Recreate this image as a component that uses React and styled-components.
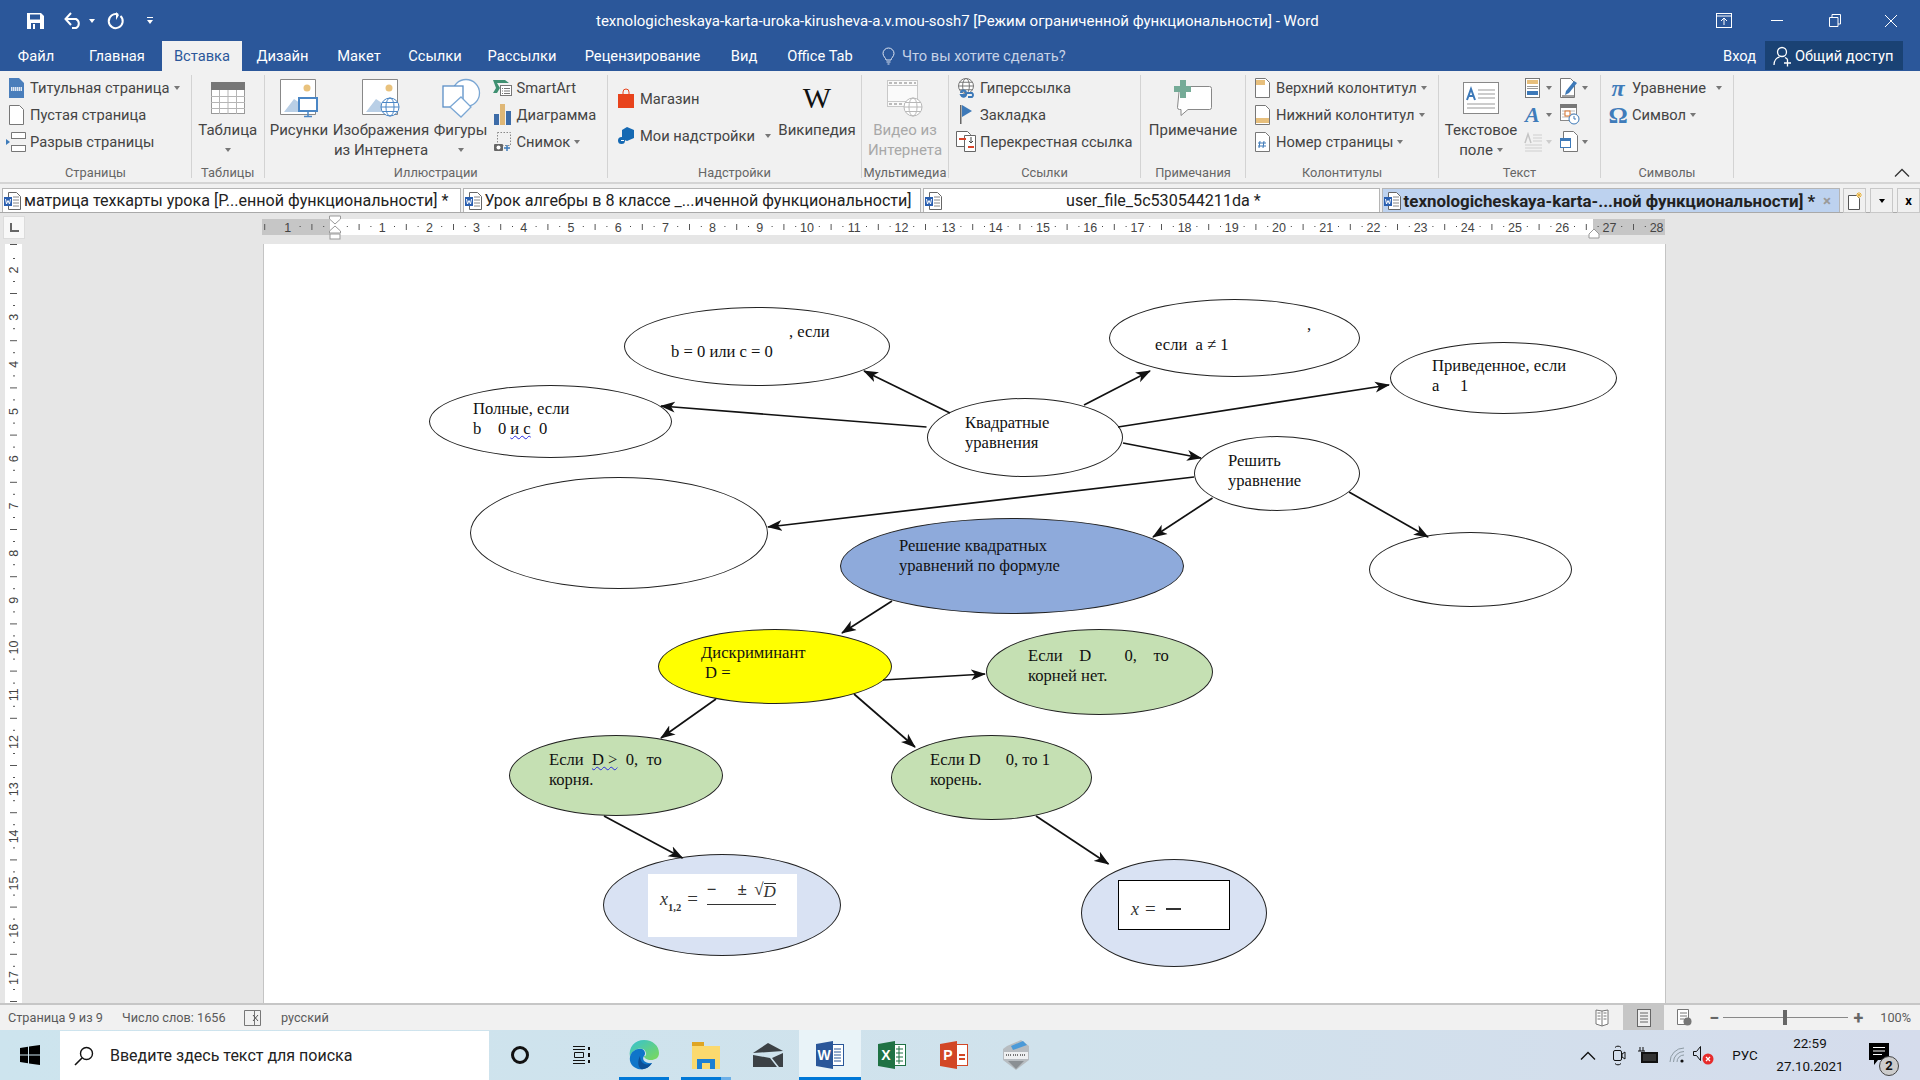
import React from "react";
import styled, { createGlobalStyle } from "styled-components";

const UI_FONT = `Roboto, "Liberation Sans", sans-serif`;

const GlobalStyle = createGlobalStyle`
  html, body { margin: 0; padding: 0; overflow: hidden; background: #e6e6e6; }
  body { font-family: ${UI_FONT}; }
`;

const Window = styled.div`
  width: 1920px;
  height: 1080px;
  display: flex;
  flex-direction: column;
  overflow: hidden;
`;

/* title bar */
const TitleBar = styled.div`
  height: 41px;
  background: #2b579a;
  display: flex;
  align-items: center;
  color: #fff;
`;
const Qat = styled.div`
  width: 596px;
  display: flex;
  align-items: center;
  padding-left: 27px;
  box-sizing: border-box;
`;
const QatSlot = styled.span`
  display: flex;
  align-items: center;
  margin-right: ${(p) => p.$gap || 0}px;
`;
const TitleText = styled.div`
  width: 1100px;
  font-size: 15px;
  white-space: nowrap;
`;
const WinButtons = styled.div`
  display: flex;
  align-items: center;
`;
const WinButton = styled.span`
  width: ${(p) => p.$w}px;
  display: flex;
  justify-content: center;
`;

/* ribbon tabs */
const TabBar = styled.div`
  height: 30px;
  background: #2b579a;
  display: flex;
  align-items: stretch;
  color: #fff;
  font-size: 14.7px;
`;
const Tab = styled.div`
  width: ${(p) => p.$w}px;
  display: flex;
  align-items: center;
  justify-content: center;
  white-space: nowrap;
  background: ${(p) => (p.$active ? "#f1f1f1" : "transparent")};
  color: ${(p) => (p.$active ? "#2b579a" : "#fff")};
`;
const Tell = styled.div`
  display: flex;
  align-items: center;
  gap: 7px;
  color: #c6d2e6;
  width: 855px;
  padding-left: 14px;
  box-sizing: border-box;
`;
const SignIn = styled.div`
  display: flex;
  align-items: center;
  width: 42px;
`;
const Share = styled.div`
  width: 138px;
  display: flex;
  align-items: center;
  gap: 3px;
  padding-left: 8px;
  box-sizing: border-box;
  margin-bottom: 1px;
  background: #1a4274;
`;

/* ribbon */
const Ribbon = styled.div`
  height: 111px;
  background: #f1f1f1;
  display: flex;
  position: relative;
  color: #444;
  font-size: 15px;
`;
const Group = styled.div`
  width: ${(p) => p.$w}px;
  height: 103px;
  margin-top: 4px;
  box-sizing: border-box;
  border-right: 1px solid #d3d3d3;
  display: flex;
  flex-direction: column;
`;
const GroupBody = styled.div`
  height: 90px;
  display: flex;
  padding-left: ${(p) => p.$pad || 0}px;
`;
const GroupLabel = styled.div`
  height: 13px;
  line-height: 16px;
  text-align: center;
  font-size: 12.8px;
  color: #666;
  white-space: nowrap;
`;
const SmallCol = styled.div`
  display: flex;
  flex-direction: column;
  width: ${(p) => (p.$w ? `${p.$w}px` : "auto")};
  gap: ${(p) => p.$gap || 0}px;
  margin-top: ${(p) => p.$top ?? -1}px;
  margin-left: ${(p) => p.$left || 0}px;
  font-size: 14.7px;
`;
const SmallRow = styled.div`
  height: 27px;
  display: flex;
  align-items: center;
  white-space: nowrap;
`;
const RowIcon = styled.span`
  width: 20px;
  margin-right: 4px;
  display: flex;
  justify-content: center;
  align-items: center;
`;
const Caret = styled.span`
  display: inline-block;
  width: 0;
  height: 0;
  margin-left: ${(p) => p.$left ?? 4}px;
  border-left: 3.5px solid transparent;
  border-right: 3.5px solid transparent;
  border-top: 4px solid ${(p) => p.$color || "#777"};
`;
const LargeButton = styled.div`
  width: ${(p) => p.$w}px;
  display: flex;
  flex-direction: column;
  align-items: center;
  color: ${(p) => (p.$off ? "#a8a8a8" : "inherit")};
`;
const LargeIcon = styled.div`
  height: 45px;
  display: flex;
  align-items: center;
  justify-content: center;
`;
const LargeLine = styled.div`
  height: 20px;
  line-height: 20px;
  white-space: nowrap;
  display: flex;
  align-items: center;
`;
const MiniGrid = styled.div`
  display: grid;
  grid-template-columns: 35px 35px;
  grid-auto-rows: 27px;
  padding-left: 2px;
  margin-top: -1px;
`;
const MiniCell = styled.div`
  display: flex;
  align-items: center;
`;
const Collapse = styled.span`
  position: absolute;
  right: 10px;
  bottom: 5px;
`;
const BigSerif = styled.span`
  font-family: "Liberation Serif", serif;
  font-size: 30px;
  color: #111;
  line-height: 1;
`;
const MathGlyph = styled.span`
  font-family: "Liberation Serif", serif;
  font-style: ${(p) => (p.$italic ? "italic" : "normal")};
  font-weight: 700;
  font-size: ${(p) => p.$size || 24}px;
  line-height: 1;
  color: #3f7cba;
`;

/* document tabs */
const DocTabs = styled.div`
  height: 31px;
  box-sizing: border-box;
  background: #f0f0f0;
  border-top: 2px solid #d4d4d4;
  border-bottom: 1px solid #a9a9a9;
  padding: 4px 0 0 2px;
  display: flex;
  gap: 2px;
  font-size: 16px;
  color: #222;
`;
const DocTab = styled.div`
  width: ${(p) => p.$w}px;
  box-sizing: border-box;
  border: 1px solid #b5b5b5;
  border-bottom: none;
  background: ${(p) => (p.$active ? "#bdd2ef" : "#fff")};
  font-weight: ${(p) => (p.$active ? 700 : 400)};
  font-size: ${(p) => (p.$active ? 16.9 : 16.1)}px;
  display: flex;
  align-items: center;
  padding-left: 1px;
  white-space: nowrap;
  overflow: hidden;
`;
const DocTabName = styled.span`
  flex: 1;
  padding-left: ${(p) => p.$pad || 3}px;
`;
const DocClose = styled.span`
  color: #9a9a9a;
  font-weight: 700;
  font-size: 15px;
  margin-right: 8px;
`;
const StripButton = styled.div`
  width: 23px;
  margin-left: ${(p) => p.$left || 1}px;
  height: 25px;
  box-sizing: border-box;
  border: 1px solid #c8c8c8;
  display: flex;
  align-items: center;
  justify-content: center;
  color: #000;
  font-weight: 700;
  font-size: 13px;
`;

/* document area */
const DocArea = styled.div`
  height: 790px;
  background: #e6e6e6;
  display: flex;
  flex-direction: column;
`;
const RulerRow = styled.div`
  height: 31px;
  display: flex;
  padding-top: 3px;
  box-sizing: border-box;
`;
const RulerCorner = styled.div`
  width: 22px;
  height: 23px;
  margin-left: 3px;
  box-sizing: border-box;
  background: #f8f8f8;
  border: 1px solid #dcdcdc;
  display: flex;
  align-items: center;
  justify-content: center;
`;
const HRulerSlot = styled.div`
  margin-left: 237px;
`;
const DocBody = styled.div`
  flex: 1;
  display: flex;
  min-height: 0;
`;
const VRulerSlot = styled.div`
  width: 17px;
  margin-left: 5px;
  background: #fff;
  overflow: hidden;
`;
const Page = styled.div`
  width: 1403px;
  margin-left: 241px;
  box-sizing: border-box;
  background: #fff;
  border-left: 1px solid #c4c4c4;
  border-right: 1px solid #c4c4c4;
  position: relative;
  overflow: hidden;
`;
const Arrows = styled.svg`
  position: absolute;
  left: 0;
  top: 0;
`;
const Node = styled.div`
  position: absolute;
  left: ${(p) => p.$x - 264}px;
  top: ${(p) => p.$y - 244}px;
  width: ${(p) => p.$w}px;
  height: ${(p) => p.$h}px;
  box-sizing: border-box;
  padding: ${(p) => p.$top || 0}px 0 0 ${(p) => p.$left || 0}px;
  background: ${(p) => p.$bg || "#fff"};
  border: 1px solid #222;
  border-radius: 50%;
  font-family: "Liberation Serif", serif;
  font-size: 16.6px;
  line-height: 20px;
  color: #111;
  white-space: pre;
`;
const Line = styled.div`
  height: 20px;
  padding-left: ${(p) => p.$indent || 0}px;
`;
const Wavy = styled.span`
  text-decoration: underline wavy #2a2ae0 1px;
`;
const FormulaBox = styled.div`
  position: absolute;
  left: ${(p) => p.$x}px;
  top: ${(p) => p.$y}px;
  width: ${(p) => p.$w}px;
  height: ${(p) => p.$h}px;
  box-sizing: border-box;
  background: #fff;
  border: ${(p) => (p.$framed ? "1px solid #000" : "none")};
  display: flex;
  align-items: ${(p) => (p.$framed ? "center" : "flex-start")};
  padding: ${(p) => p.$pad};
  font-family: "Liberation Serif", serif;
  font-size: 17px;
  color: #333;
`;
const MathVar = styled.i`
  font-size: 18px;
`;
const MathSub = styled.span`
  font-size: 10.5px;
  font-weight: 700;
  margin-top: 9px;
`;
const Eq = styled.span`
  margin: 0 9px 0 6px;
  font-size: 19px;
`;
const Fraction = styled.div`
  width: 69px;
  height: 22px;
  margin-top: -10px;
  border-bottom: 1.5px solid #333;
  display: flex;
  align-items: center;
  line-height: 18px;
  padding-bottom: 3px;
  font-weight: 700;
`;
const FractionPlusMinus = styled.span`
  margin-left: 21px;
`;
const Radical = styled.span`
  display: flex;
  align-items: flex-end;
  margin-left: auto;
  font-weight: 400;
`;
const Radicand = styled.i`
  border-top: 1px solid #333;
  line-height: 15px;
`;
const BarMinus = styled.span`
  display: inline-block;
  width: 15px;
  height: 2px;
  background: #333;
  margin-left: 1px;
`;

/* status bar */
const StatusBar = styled.div`
  height: 27px;
  box-sizing: border-box;
  background: #f1f1f1;
  border-top: 2px solid #c6c6c6;
  display: flex;
  align-items: center;
  font-size: 12.7px;
  color: #5a5a5a;
  padding-left: 8px;
`;
const StatusText = styled.span`
  width: ${(p) => p.$w}px;
  padding-left: ${(p) => p.$pad || 0}px;
  white-space: nowrap;
`;
const StatusIcon = styled.span`
  width: ${(p) => p.$w}px;
  height: 25px;
  display: flex;
  align-items: center;
  justify-content: center;
  margin-left: ${(p) => p.$left || 0}px;
  background: ${(p) => (p.$on ? "#c6c6c6" : "transparent")};
`;
const StatusRight = styled.div`
  margin-left: auto;
  display: flex;
  align-items: center;
  padding-right: 9px;
`;
const Zoom = styled.div`
  width: 125px;
  height: 1px;
  background: #888;
  margin: 0 3px 0 2px;
  position: relative;
`;
const ZoomThumb = styled.span`
  position: absolute;
  left: 60px;
  top: -7px;
  width: 4px;
  height: 15px;
  background: #666;
`;
const ZoomSign = styled.span`
  width: 14px;
  margin-left: ${(p) => p.$left || 0}px;
  text-align: center;
  font-size: 18px;
  line-height: 1;
  font-weight: 700;
  color: #666;
`;
const ZoomValue = styled.span`
  margin-left: 15px;
`;

/* taskbar */
const Taskbar = styled.div`
  height: 50px;
  background: linear-gradient(90deg, #cde4ee 0%, #d0e2ec 55%, #d5dcec 100%);
  display: flex;
  align-items: stretch;
  color: #111;
`;
const StartSlot = styled.div`
  width: 60px;
  display: flex;
  align-items: center;
  justify-content: center;
`;
const SearchBox = styled.div`
  width: 429px;
  margin-top: 1px;
  background: #fff;
  display: flex;
  align-items: center;
  font-size: 16px;
  color: #222;
  box-sizing: border-box;
  padding-left: 14px;
  gap: 16px;
`;
const TaskCell = styled.div`
  width: 62px;
  display: flex;
  align-items: center;
  justify-content: center;
  position: relative;
  background: ${(p) => (p.$active ? "#e9f3f8" : "transparent")};
`;
const RunBar = styled.span`
  position: absolute;
  bottom: 0;
  height: 3px;
  left: ${(p) => p.$inset}px;
  right: ${(p) => p.$inset}px;
  background: ${(p) => (p.$split ? "linear-gradient(90deg, #0078d7 80%, #6db0e8 80%)" : "#0078d7")};
`;
const Tray = styled.div`
  margin-left: auto;
  display: flex;
  padding-right: 8px;
  font-size: 13.4px;
`;
const TrayCell = styled.div`
  width: ${(p) => p.$w}px;
  display: flex;
  flex-direction: column;
  align-items: center;
  justify-content: center;
  line-height: 23px;
  position: relative;
`;
const NotifBadge = styled.span`
  position: absolute;
  left: 33px;
  top: 26px;
  width: 20px;
  height: 20px;
  box-sizing: border-box;
  border-radius: 50%;
  border: 1px solid #444;
  background: #ccc;
  font-size: 13px;
  font-weight: 700;
  line-height: 18px;
  text-align: center;
`;

/* icon drawings */
const Drawing = styled.svg`
  display: block;
  overflow: visible;
`;
const Glyph = ({ w, h, children }) => (
  <Drawing width={w} height={h} viewBox={`0 0 ${w} ${h}`}>
    {children}
  </Drawing>
);
const pageD = (x, y, w, h) => `M${x + 0.5} ${y + 0.5}h${w - 5}l4 4v${h - 5}h-${w - 1}z`;

const SaveIcon = () => (
  <Glyph w={17} h={16}>
    <path d="M0 0h14l3 3v13H0z" fill="#fff" />
    <rect x="3" y="1.5" width="10" height="5" fill="#2b579a" />
    <rect x="4" y="10" width="9" height="6" fill="#2b579a" />
    <rect x="6" y="11" width="2" height="5" fill="#fff" />
  </Glyph>
);
const UndoIcon = () => (
  <Glyph w={19} h={17}>
    <path d="M2 7h10a5 5 0 0 1 0 9H8" fill="none" stroke="#fff" strokeWidth="2" />
    <path d="M7 1L1.5 7 7 13" fill="none" stroke="#fff" strokeWidth="2" />
  </Glyph>
);
const RedoIcon = () => (
  <Glyph w={17} h={17}>
    <path d="M11 2.5A7 7 0 1 0 13.5 4" fill="none" stroke="#fff" strokeWidth="2" />
    <path d="M9 0l3 3-3 5V0z" fill="#fff" />
  </Glyph>
);
const CustomizeIcon = () => (
  <Glyph w={7} h={8}>
    <rect y="0" width="6" height="1" fill="#fff" />
    <path d="M0 3h6L3 7z" fill="#fff" />
  </Glyph>
);
const RibbonDisplayIcon = () => (
  <Glyph w={16} h={15}>
    <rect x="0.5" y="0.5" width="15" height="14" fill="none" stroke="#fff" />
    <path d="M1 3h14M8 12V5M5 8l3-3 3 3" fill="none" stroke="#fff" />
  </Glyph>
);
const MinIcon = () => (
  <Glyph w={12} h={2}>
    <rect width="12" height="1" fill="#fff" />
  </Glyph>
);
const MaxIcon = () => (
  <Glyph w={12} h={13}>
    <path d="M3 3V.5h8.5V10H9M.5 3.5H9v9H.5z" fill="none" stroke="#fff" />
  </Glyph>
);
const CloseIcon = () => (
  <Glyph w={12} h={12}>
    <path d="M0 0l12 12M12 0L0 12" stroke="#fff" />
  </Glyph>
);
const BulbIcon = () => (
  <Glyph w={13} h={17}>
    <path d="M4 12c0-2-3-3.500-3-6.500a5.500 5.500 0 0 1 11 0c0 3-3 4.500-3 6.500z M4.500 14h4M5.500 16h2" fill="none" stroke="#dfe6f2" />
  </Glyph>
);
const PersonIcon = () => (
  <Glyph w={19} h={20}>
    <circle cx="9" cy="6" r="4.500" fill="none" stroke="#fff" strokeWidth="1.300" />
    <path d="M1 19c0-5 3-7.500 5.500-8M12 11.500c1 .5 2 1 2.500 2M11 17h7M14.500 13.500v7" fill="none" stroke="#fff" strokeWidth="1.300" />
  </Glyph>
);
const CoverIcon = () => (
  <Glyph w={15} h={20}>
    <path d="M0 0h10l5 5v15H0z" fill="#4a7ebb" />
    <rect x="2" y="9" width="11" height="4" fill="#dfe8f3" />
    <path d="M3 10h9M3 12h9" stroke="#4a7ebb" strokeDasharray="1 1" />
  </Glyph>
);
const BlankIcon = () => (
  <Glyph w={15} h={20}>
    <path d={pageD(0, 0, 15, 20)} fill="#fff" stroke="#777" />
  </Glyph>
);
const BreakIcon = () => (
  <Glyph w={20} h={20}>
    <path d="M5.500 6.500V.5h14v6M5.500 13.500v6h14v-6M5 6.500h15M5 13.500h15" fill="#fff" stroke="#777" />
    <path d="M0 7l4 3-4 3z" fill="#3f7cba" />
  </Glyph>
);
const TableIcon = () => (
  <Glyph w={34} h={32}>
    <rect x="0.500" y="0.500" width="33" height="31" fill="#fff" stroke="#999" />
    <rect x="0" y="0" width="34" height="8" fill="#777" />
    <path d="M0 14.500h34M0 20.500h34M0 26.500h34M8.500 8v24M17 8v24M25.500 8v24" stroke="#b5b5b5" />
  </Glyph>
);
const PictureBase = () => (
  <g>
    <path d="M.5.5h35v35H.5z" fill="#fff" stroke="#888" />
    <circle cx="27" cy="9" r="3.500" fill="#e9c27d" />
    <path d="M4 33l10-13 6 4 4-3v12H4z" fill="#b9cfe6" />
  </g>
);
const PicturesIcon = () => (
  <Glyph w={38} h={38}>
    <PictureBase />
    <rect x="19" y="19" width="18" height="13" fill="#fff" stroke="#4a86c5" strokeWidth="2" />
    <path d="M28 32v5M24 37.500h8" stroke="#4a86c5" strokeWidth="1.500" />
  </Glyph>
);
const GlobeGlyph = ({ cx, cy, r, color }) => (
  <g fill="none" stroke={color} strokeWidth="1">
    <circle cx={cx} cy={cy} r={r} fill="#fff" />
    <ellipse cx={cx} cy={cy} rx={r * 0.45} ry={r} />
    <path d={`M${cx - r} ${cy}h${r * 2}M${cx - r * 0.85} ${cy - r * 0.5}h${r * 1.7}M${cx - r * 0.85} ${cy + r * 0.5}h${r * 1.7}`} />
  </g>
);
const OnlineIcon = () => (
  <Glyph w={38} h={38}>
    <PictureBase />
    <GlobeGlyph cx={28} cy={28} r={9} color="#4a86c5" />
  </Glyph>
);
const ShapesIcon = () => (
  <Glyph w={38} h={38}>
    <circle cx="24" cy="14" r="13.500" fill="#fff" stroke="#7ba7d4" strokeWidth="1.300" />
    <rect x="1" y="7" width="20" height="21" fill="#fff" stroke="#5b8fc7" strokeWidth="1.300" />
    <path d="M19 18l10 10-10 10L8 28z" fill="#fff" stroke="#7ba7d4" strokeWidth="1.300" />
  </Glyph>
);
const SmartArtIcon = () => (
  <Glyph w={19} h={16}>
    <path d="M0 0h12l4 3H4l3 5-3 5H0l3-5z" fill="#3f9071" />
    <rect x="7.500" y="5.500" width="11" height="10" fill="#fff" stroke="#777" />
    <path d="M9 8.500h1M11 8.500h6M9 11h1M11 11h6M9 13.500h1M11 13.500h6" stroke="#777" />
  </Glyph>
);
const ChartIcon = () => (
  <Glyph w={17} h={21}>
    <rect x="0" y="10" width="5" height="11" fill="#3d6ca8" />
    <rect x="6" y="0" width="5" height="21" fill="#dfb776" />
    <rect x="12" y="7" width="5" height="14" fill="#3d6ca8" />
  </Glyph>
);
const SnapIcon = () => (
  <Glyph w={17} h={20}>
    <rect x="3.500" y="0.500" width="13" height="13" fill="none" stroke="#888" strokeDasharray="1.500 1.500" />
    <rect x="0" y="12" width="9" height="7" rx="1" fill="#666" />
    <circle cx="4.500" cy="15.500" r="2" fill="#fff" />
    <path d="M10 16h6M13 13v6" stroke="#3f7cba" strokeWidth="1.500" />
  </Glyph>
);
const StoreIcon = () => (
  <Glyph w={16} h={19}>
    <path d="M0 5h16v14H0z" fill="#e8431c" />
    <path d="M5 7V3a3 3 0 0 1 6 0v4" fill="none" stroke="#e8431c" />
  </Glyph>
);
const AddinsIcon = () => (
  <Glyph w={17} h={18}>
    <path d="M9 0l7 3v8l-7 3-5-2V3z" fill="#1569b3" />
    <circle cx="3.500" cy="13.500" r="3.500" fill="#1569b3" />
    <path d="M3 13.500h3" stroke="#fff" />
  </Glyph>
);
const VideoIcon = () => (
  <Glyph w={36} h={36}>
    <rect x="0.500" y="0.500" width="30" height="26" fill="#fafafa" stroke="#c8c8c8" />
    <path d="M0 5.500h31M0 21.500h31" stroke="#c8c8c8" />
    <path d="M2 3h27M2 24h27" stroke="#bbb" strokeDasharray="3 2" strokeWidth="2" />
    <GlobeGlyph cx={26} cy={27} r={9} color="#b8b8b8" />
  </Glyph>
);
const LinkIcon = () => (
  <Glyph w={19} h={20}>
    <GlobeGlyph cx={9} cy={8} r={7.500} color="#777" />
    <path d="M4 15a2.500 2.500 0 0 1 5 0M9 15a2.500 2.500 0 0 1 -5 2h5M10 15h5a2.500 2.500 0 0 1 0 4h-4" fill="none" stroke="#3d79b8" strokeWidth="2" />
  </Glyph>
);
const BookmarkIcon = () => (
  <Glyph w={13} h={19}>
    <rect x="0" y="0" width="1.500" height="19" fill="#666" />
    <path d="M2 0l10 6-10 6z" fill="#3d79b8" />
  </Glyph>
);
const CrossRefIcon = () => (
  <Glyph w={20} h={21}>
    <path d="M.5.5h11l3 3v12H.5z" fill="#fff" stroke="#666" />
    <path d="M8.500 4.500h11v16h-11z" fill="#fff" stroke="#666" />
    <rect x="3" y="7" width="7" height="2" fill="#d9442a" />
    <rect x="12" y="15" width="6" height="2" fill="#d9442a" />
    <path d="M15 6v6M13 10l2 2 2-2" fill="none" stroke="#444" />
  </Glyph>
);
const CommentIcon = () => (
  <Glyph w={38} h={36}>
    <path d="M5.500 6.500h30a2 2 0 0 1 2 2v19a2 2 0 0 1 -2 2H14l-7 6v-6H5.500a2 2 0 0 1 -2 -2z" fill="#fff" stroke="#888" />
    <rect x="0" y="6" width="17" height="6" fill="#75ab97" />
    <rect x="6" y="0" width="6" height="18" fill="#75ab97" />
  </Glyph>
);
const HeaderFooterIcon = ({ foot }) => (
  <Glyph w={15} h={20}>
    <path d={pageD(0, 0, 15, 20)} fill="#fff" stroke="#777" />
    <rect x="1" y={foot ? 13 : 2} width={foot ? 13 : 9} height="5" fill="#e7bf7c" />
  </Glyph>
);
const PageNoIcon = () => (
  <Glyph w={15} h={20}>
    <path d={pageD(0, 0, 15, 20)} fill="#fff" stroke="#777" />
    <path d="M5 9l-1 7M9 9l-1 7M3 11h8M3 14h8" stroke="#3d79b8" />
  </Glyph>
);
const TextBoxIcon = () => (
  <Glyph w={36} h={32}>
    <rect x="0.500" y="0.500" width="35" height="31" fill="#fff" stroke="#888" />
    <path d="M4 18l4-11 4 11M5.500 14h5" fill="none" stroke="#3d79b8" strokeWidth="2" />
    <path d="M15 8h17M15 12h17M15 16h17M4 22h28M4 26h28" stroke="#999" />
  </Glyph>
);
const PartsIcon = () => (
  <Glyph w={15} h={20}>
    <rect x="0.500" y="0.500" width="14" height="19" fill="#fff" stroke="#777" />
    <rect x="2" y="2" width="11" height="4" fill="#e7bf7c" />
    <path d="M2 8.500h11M2 10.500h11" stroke="#999" />
    <rect x="2" y="13" width="11" height="4" fill="#3d79b8" />
  </Glyph>
);
const SignIcon = () => (
  <Glyph w={20} h={21}>
    <path d={pageD(0, 1, 15, 20)} fill="#fff" stroke="#777" />
    <path d="M6 14l8-10 3 2-8 10-4 2z" fill="#3d79b8" />
    <path d="M2 19h12" stroke="#444" />
  </Glyph>
);
const DropCapIcon = () => (
  <Glyph w={17} h={20}>
    <path d="M0 11l3-9 3 9" fill="none" stroke="#c4c4c4" strokeWidth="1.500" />
    <path d="M8 3h9M8 6h9M8 9h9M0 13h17M0 16h17M0 19h17" stroke="#cfcfcf" />
  </Glyph>
);
const CalendarIcon = () => (
  <Glyph w={20} h={21}>
    <rect x="0.500" y="0.500" width="16" height="16" fill="#fff" stroke="#888" />
    <rect x="0" y="0" width="17" height="4" fill="#777" />
    <path d="M2 7h13M2 10h13M2 13h13" stroke="#bbb" />
    <rect x="5" y="7" width="5" height="5" fill="#fff" stroke="#d9722a" />
    <circle cx="14" cy="15" r="5" fill="#fff" stroke="#3d79b8" />
    <path d="M14 12v3h2" fill="none" stroke="#3d79b8" />
  </Glyph>
);
const ObjectIcon = () => (
  <Glyph w={18} h={21}>
    <path d={pageD(3, 0, 15, 21)} fill="#fff" stroke="#777" />
    <rect x="0.500" y="7.500" width="10" height="9" fill="#fff" stroke="#3d79b8" />
    <rect x="0" y="7" width="11" height="3" fill="#3d79b8" />
  </Glyph>
);
const DocIcon = () => (
  <Glyph w={17} h={18}>
    <path d={pageD(4, 0, 13, 18)} fill="#fff" stroke="#666" />
    <path d="M9 5h6M9 8h6M9 11h6M9 14h6" stroke="#888" />
    <rect x="0" y="5" width="8" height="9" fill="#2a5fb0" />
    <path d="M1.500 7l1 5 1.500-3.500L5.500 12l1-5" fill="none" stroke="#fff" />
  </Glyph>
);
const NewTabIcon = () => (
  <Glyph w={14} h={18}>
    <path d="M.5 3.500h8l3 3v11H.5z" fill="#fff" stroke="#555" />
    <path d="M11 0v6M8 3h6M9 1l4 4M13 1L9 5" stroke="#e9b23a" />
  </Glyph>
);
const CornerIcon = () => (
  <Glyph w={9} h={9}>
    <path d="M1 0v8h8" fill="none" stroke="#666" strokeWidth="2" />
  </Glyph>
);
const ProofIcon = () => (
  <Glyph w={17} h={18}>
    <path d="M.5 1.500h10v15H.5zM10 1.500h6.500v15H10" fill="none" stroke="#777" />
    <path d="M9 6l5 6M14 6l-5 6" stroke="#555" />
  </Glyph>
);
const ReadIcon = () => (
  <Glyph w={14} h={18}>
    <path d="M7 2L1 1v14l6 2 6-2V1z" fill="#fff" stroke="#777" />
    <path d="M7 2v15M2.500 4h3M2.500 7h3M2.500 10h3M8.500 4h3M8.500 7h3M8.500 10h3" stroke="#777" />
  </Glyph>
);
const PrintIcon = () => (
  <Glyph w={14} h={18}>
    <rect x="0.500" y="0.500" width="13" height="17" fill="#eee" stroke="#666" />
    <path d="M3 4h8M3 7h8M3 10h8M3 13h8" stroke="#666" />
  </Glyph>
);
const WebIcon = () => (
  <Glyph w={15} h={18}>
    <path d="M.5.5h11v15H.5z" fill="#fff" stroke="#777" />
    <path d="M3 4h7M3 7h7M3 10h4" stroke="#777" />
    <circle cx="10.500" cy="12.500" r="4" fill="#777" />
  </Glyph>
);
const StartIcon = () => (
  <Glyph w={20} h={20}>
    <path d="M0 3l8-1.200V9.500H0zM9 1.600L20 0v9.500H9zM0 10.500h8v7.700L0 17zM9 10.500h11V20L9 18.400z" fill="#000" />
  </Glyph>
);
const SearchIcon = () => (
  <Glyph w={20} h={20}>
    <circle cx="12.500" cy="7.500" r="6" fill="none" stroke="#111" strokeWidth="1.400" />
    <path d="M8 12l-7 7" stroke="#111" strokeWidth="1.600" />
  </Glyph>
);
const CortanaIcon = () => (
  <Glyph w={18} h={18}>
    <circle cx="9" cy="9" r="7.500" fill="none" stroke="#111" strokeWidth="3" />
  </Glyph>
);
const TaskViewIcon = () => (
  <Glyph w={20} h={18}>
    <path d="M1 3.500h12M1 14.500h12M1 .5h12M1 17.500h12" stroke="#111" />
    <path d="M2.500 6.500h9v5h-9z" fill="none" stroke="#111" />
    <path d="M17 1v3M17 7v4M17 14v3" stroke="#111" strokeWidth="2" />
  </Glyph>
);
const EdgeIcon = () => (
  <Glyph w={30} h={30}>
    <defs>
      <linearGradient id="edgeTop" x1="0" y1="0" x2="1" y2="1">
        <stop offset="0" stopColor="#35c1d3" />
        <stop offset="1" stopColor="#7ed957" />
      </linearGradient>
    </defs>
    <path d="M15 0c9 0 15 6 15 13 0 5-4 7-8 7-4 0-7-2-7-4 3 1 3-5-1-7C9 7 2 11 1 17-1 7 6 0 15 0z" fill="url(#edgeTop)" />
    <path d="M1 17c1-6 7-9 12-8 3 1 4 5 2 7-3 4 2 8 8 7-3 5-9 7-14 6-6-2-9-7-8-12z" fill="#0f75c9" />
    <path d="M11 16c0 6 5 11 12 7-3 5-8 7-11 6-4-3-3-9-1-13z" fill="#0c4f97" />
  </Glyph>
);
const ExplorerIcon = () => (
  <Glyph w={28} h={27}>
    <path d="M0 2h10l2 2h16v23H0z" fill="#fbd96e" />
    <path d="M0 0h12v4H0z" fill="#dfa523" />
    <path d="M5 27V17h18v10h-5v-6h-8v6z" fill="#1d7fd3" />
  </Glyph>
);
const MailIcon = () => (
  <Glyph w={30} h={24}>
    <path d="M0 10L15 0l15 8z" fill="#3c4145" />
    <path d="M0 12l17 3 7 9H0zM30 10l-11 5 7 9h4z" fill="#3c4145" />
  </Glyph>
);
const OfficeIcon = ({ color, letter, lines }) => (
  <Glyph w={28} h={28}>
    <rect x="12" y="3.500" width="15.500" height="21" fill="#fff" stroke={color} />
    {lines}
    <path d="M0 3l17-3v28L0 25z" fill={color} />
    <text x="8" y="19" textAnchor="middle" fontFamily="Liberation Sans, sans-serif" fontSize="14" fontWeight="700" fill="#fff">
      {letter}
    </text>
  </Glyph>
);
const ToolIcon = () => (
  <Glyph w={30} h={30}>
    <path d="M6 6L20 0l8 6v14l-13 10L2 20V9z" fill="#b7bcc0" />
    <path d="M10 6l12-5 4 4-14 5z" fill="#4b9ad8" />
    <rect x="3" y="12" width="24" height="7" fill="#eef0f1" />
    <path d="M5 15h5M12 15h5M19 15h5" stroke="#777" strokeDasharray="1 1" strokeWidth="2" />
    <path d="M7 21l8 8 8-8z" fill="#8a8f93" />
  </Glyph>
);
const ChevronIcon = ({ color = "#333" }) => (
  <Glyph w={16} h={9}>
    <path d="M1 8.500l7-7 7 7" fill="none" stroke={color} strokeWidth="1.300" />
  </Glyph>
);
const MeetIcon = () => (
  <Glyph w={15} h={21}>
    <path d="M4 2.500a4 4 0 0 1 6 0M4 18.500a4 4 0 0 0 6 0" fill="none" stroke="#111" />
    <rect x="2.500" y="5.500" width="8" height="10" rx="1.500" fill="none" stroke="#111" />
    <path d="M11 9l3-2v7l-3-2z" fill="none" stroke="#111" />
  </Glyph>
);
const BatteryIcon = () => (
  <Glyph w={20} h={17}>
    <rect x="3" y="5" width="17" height="11" fill="#111" />
    <rect x="5" y="7" width="13" height="7" fill="#333" />
    <path d="M2 0v4M5 0v4M0 4h7" stroke="#111" />
  </Glyph>
);
const WifiIcon = () => (
  <Glyph w={16} h={16}>
    <path d="M1 15A14 14 0 0 1 15 1M4.500 15A10.500 10.500 0 0 1 15 4.500M8 15A7 7 0 0 1 15 8" fill="none" stroke="#8d9aa3" />
    <circle cx="13" cy="14" r="1.600" fill="#111" />
  </Glyph>
);
const SpeakerIcon = () => (
  <Glyph w={21} h={20}>
    <path d=".5 6.500h3l4-5v14l-4-5h-3z" fill="none" stroke="#111" />
    <path d="M.5 6.500h3l4-5v14l-4-5h-3z" fill="none" stroke="#111" />
    <circle cx="15" cy="14" r="5.500" fill="#e62b2b" />
    <path d="M13 12l4 4M17 12l-4 4" stroke="#fff" strokeWidth="1.300" />
  </Glyph>
);
const NotifIcon = () => (
  <Glyph w={20} h={24}>
    <path d="M0 0h20v17H9l-4 5v-5H0z" fill="#000" />
    <path d="M4 4.500h12M4 8h12M4 11.500h9" stroke="#fff" strokeWidth="1.200" />
  </Glyph>
);

const rulerNums = Array.from({ length: 28 }, (_, i) => i + 1);
const CM = 47.2;
const RulerNum = styled.text`
  font-family: "Liberation Sans", sans-serif;
  font-size: 12.5px;
  fill: #444;
  text-anchor: middle;
`;

const HRuler = () => {
  const zero = 73; // left margin mark inside the drawing
  const at = (n) => zero + n * CM;
  const marks = [];
  for (let n = -2; n < 29; n++) {
    const x = at(n);
    if (x + 23.6 > 0 && x + 23.6 < 1403) {
      marks.push(<rect key={`t${n}`} x={x + 23.600} y="8" width="1" height="6" fill="#555" />);
    }
    if (x + 11.8 > 0 && x + 35.4 < 1403) {
      marks.push(<rect key={`d${n}`} x={x + 11.800} y="10" width="1" height="1" fill="#444" />);
      marks.push(<rect key={`e${n}`} x={x + 35.400} y="10" width="1" height="1" fill="#444" />);
    }
  }
  return (
    <Drawing width="1403" height="26" viewBox="0 0 1403 26">
      <rect x="0" y="3" width="1403" height="16" fill="#fff" />
      <rect x="0" y="3" width="68" height="16" fill="#c6c6c6" />
      <rect x="1331" y="3" width="72" height="16" fill="#c6c6c6" />
      {marks}
      <RulerNum x={at(-1)} y="15.500">1</RulerNum>
      {rulerNums.map((n) => (
        <RulerNum key={n} x={at(n)} y="15.500">{n}</RulerNum>
      ))}
      <path d="M67.500 0h11v3l-5.500 5-5.500-5zM67.500 15l5.500-5 5.500 5v2h-11z" fill="#fff" stroke="#999" />
      <rect x="68" y="18" width="10" height="5" fill="#fff" stroke="#999" />
      <path d="M1327 18l5-5 5 5v4h-10z" fill="#fff" stroke="#999" />
    </Drawing>
  );
};

const VRuler = () => {
  const nums = Array.from({ length: 16 }, (_, i) => i + 2);
  const y = (n) => 26 + (n - 2) * CM;
  return (
    <Drawing width="17" height="760" viewBox="0 0 17 760">
      <rect x="5" y="0" width="7" height="1" fill="#555" />
      <rect x="8" y="14" width="2" height="1" fill="#555" />
      {nums.map((n) => (
        <g key={n}>
          <RulerNum transform={`translate(13 ${y(n)}) rotate(-90)`}>{n}</RulerNum>
          <rect x="8" y={y(n) + 11} width="2" height="1" fill="#555" />
          <rect x="5" y={y(n) + 23} width="7" height="1" fill="#555" />
          <rect x="8" y={y(n) + 35} width="2" height="1" fill="#555" />
        </g>
      ))}
    </Drawing>
  );
};

const arrowLines = [
  [950, 413, 864, 371],
  [926.500, 427, 661, 406],
  [1084, 405, 1150, 371],
  [1118, 427, 1389, 385],
  [1123, 443, 1201, 458],
  [1194, 477, 768, 527],
  [1212.500, 498, 1153, 537],
  [1349, 492, 1428, 537],
  [892, 601, 842, 633],
  [883, 680, 985, 674],
  [716, 699, 661, 738],
  [854, 694, 915, 747],
  [604, 816, 682.500, 858],
  [1036, 816, 1108.500, 864],
];

const Diagram = () => (
  <Page>
    <Node $x={624} $y={307} $w={266} $h={79} $top={14} $left={46}>
      <Line $indent={118}>, если</Line>
      <Line>b = 0 или с = 0</Line>
    </Node>
    <Node $x={429} $y={385} $w={243} $h={73} $top={13} $left={43}>
      <Line>Полные, если</Line>
      <Line>
        {"b    0 "}
        <Wavy>и с</Wavy>
        {"  0"}
      </Line>
    </Node>
    <Node $x={927} $y={398} $w={196} $h={79} $top={14} $left={37}>
      <Line>Квадратные</Line>
      <Line>уравнения</Line>
    </Node>
    <Node $x={1109} $y={299} $w={251} $h={78} $top={15} $left={45}>
      <Line $indent={152}>,</Line>
      <Line>если  a ≠ 1</Line>
    </Node>
    <Node $x={1390} $y={342} $w={227} $h={72} $top={13} $left={41}>
      <Line>Приведенное, если</Line>
      <Line>{"a     1"}</Line>
    </Node>
    <Node $x={1194} $y={436} $w={166} $h={75} $top={14} $left={33}>
      <Line>Решить</Line>
      <Line>уравнение</Line>
    </Node>
    <Node $x={470} $y={477} $w={298} $h={112} />
    <Node $x={1369} $y={532} $w={203} $h={75} />
    <Node $x={840} $y={518} $w={344} $h={96} $top={17} $left={58} $bg="#8eaadb">
      <Line>Решение квадратных</Line>
      <Line>уравнений по формуле</Line>
    </Node>
    <Node $x={658} $y={629} $w={234} $h={75} $top={13} $left={42} $bg="#ffff00">
      <Line>Дискриминант</Line>
      <Line $indent={4}>D =</Line>
    </Node>
    <Node $x={986} $y={629} $w={227} $h={86} $top={16} $left={41} $bg="#c5e0b3">
      <Line>{"Если    D        0,    то"}</Line>
      <Line>корней нет.</Line>
    </Node>
    <Node $x={509} $y={735} $w={214} $h={81} $top={14} $left={39} $bg="#c5e0b3">
      <Line>
        {"Если  "}
        <Wavy>D &gt;</Wavy>
        {"  0,  то"}
      </Line>
      <Line>корня.</Line>
    </Node>
    <Node $x={891} $y={735} $w={201} $h={85} $top={14} $left={38} $bg="#c5e0b3">
      <Line>{"Если D      0, то 1"}</Line>
      <Line>корень.</Line>
    </Node>
    <Node $x={603} $y={854} $w={238} $h={102} $bg="#d9e2f3">
      <FormulaBox $x={44} $y={19} $w={149} $h={63} $pad="15px 0 0 12px">
        <MathVar>x</MathVar>
        <MathSub>1,2</MathSub>
        <Eq>=</Eq>
        <Fraction>
          <span>−</span>
          <FractionPlusMinus>±</FractionPlusMinus>
          <Radical>
            √<Radicand>D</Radicand>
          </Radical>
        </Fraction>
      </FormulaBox>
    </Node>
    <Node $x={1081} $y={859} $w={186} $h={108} $bg="#d9e2f3">
      <FormulaBox $x={36} $y={20} $w={112} $h={50} $framed $pad="8px 0 0 12px">
        <MathVar>x</MathVar>
        <Eq>=</Eq>
        <BarMinus />
      </FormulaBox>
    </Node>
    <Arrows width="1402" height="760" viewBox="264 244 1402 760">
      <defs>
        <marker id="stealth" markerUnits="userSpaceOnUse" markerWidth="16" markerHeight="12" refX="14" refY="6" orient="auto">
          <path d="M0 0.500L15 6 0 11.500 4 6z" fill="#111" />
        </marker>
      </defs>
      {arrowLines.map(([x1, y1, x2, y2]) => (
        <line
          key={`${x1}-${y1}`}
          x1={x1}
          y1={y1}
          x2={x2}
          y2={y2}
          stroke="#111"
          strokeWidth="1.700"
          markerEnd="url(#stealth)"
        />
      ))}
    </Arrows>
  </Page>
);

export default function App() {
  return (
    <Window>
      <GlobalStyle />
      <TitleBar>
        <Qat>
          <QatSlot $gap={20}><SaveIcon /></QatSlot>
          <QatSlot $gap={3}><UndoIcon /></QatSlot>
          <QatSlot $gap={12}><Caret $color="#fff" $left={3} /></QatSlot>
          <QatSlot $gap={23}><RedoIcon /></QatSlot>
          <QatSlot><CustomizeIcon /></QatSlot>
        </Qat>
        <TitleText>texnologicheskaya-karta-uroka-kirusheva-a.v.mou-sosh7 [Режим ограниченной функциональности] - Word</TitleText>
        <WinButtons>
          <WinButton $w={56}><RibbonDisplayIcon /></WinButton>
          <WinButton $w={50}><MinIcon /></WinButton>
          <WinButton $w={65}><MaxIcon /></WinButton>
          <WinButton $w={48}><CloseIcon /></WinButton>
        </WinButtons>
      </TitleBar>
      <TabBar>
        <Tab $w={72}>Файл</Tab>
        <Tab $w={90}>Главная</Tab>
        <Tab $w={80} $active>Вставка</Tab>
        <Tab $w={81}>Дизайн</Tab>
        <Tab $w={72}>Макет</Tab>
        <Tab $w={80}>Ссылки</Tab>
        <Tab $w={94}>Рассылки</Tab>
        <Tab $w={147}>Рецензирование</Tab>
        <Tab $w={56}>Вид</Tab>
        <Tab $w={96}>Office Tab</Tab>
        <Tell>
          <BulbIcon />
          Что вы хотите сделать?
        </Tell>
        <SignIn>Вход</SignIn>
        <Share>
          <PersonIcon />
          Общий доступ
        </Share>
      </TabBar>
      <Ribbon>
        <Group $w={192}>
          <GroupBody $pad={6}>
            <SmallCol>
              <SmallRow><RowIcon><CoverIcon /></RowIcon>Титульная страница<Caret /></SmallRow>
              <SmallRow><RowIcon><BlankIcon /></RowIcon>Пустая страница</SmallRow>
              <SmallRow><RowIcon><BreakIcon /></RowIcon>Разрыв страницы</SmallRow>
            </SmallCol>
          </GroupBody>
          <GroupLabel>Страницы</GroupLabel>
        </Group>
        <Group $w={72.500}>
          <GroupBody>
            <LargeButton $w={72}>
              <LargeIcon><TableIcon /></LargeIcon>
              <LargeLine>Таблица</LargeLine>
              <LargeLine><Caret $left={0} /></LargeLine>
            </LargeButton>
          </GroupBody>
          <GroupLabel>Таблицы</GroupLabel>
        </Group>
        <Group $w={343.500}>
          <GroupBody $pad={3}>
            <LargeButton $w={63}>
              <LargeIcon><PicturesIcon /></LargeIcon>
              <LargeLine>Рисунки</LargeLine>
            </LargeButton>
            <LargeButton $w={101}>
              <LargeIcon><OnlineIcon /></LargeIcon>
              <LargeLine>Изображения</LargeLine>
              <LargeLine>из Интернета</LargeLine>
            </LargeButton>
            <LargeButton $w={58}>
              <LargeIcon><ShapesIcon /></LargeIcon>
              <LargeLine>Фигуры</LargeLine>
              <LargeLine><Caret $left={0} /></LargeLine>
            </LargeButton>
            <SmallCol $left={3}>
              <SmallRow><RowIcon><SmartArtIcon /></RowIcon>SmartArt</SmallRow>
              <SmallRow><RowIcon><ChartIcon /></RowIcon>Диаграмма</SmallRow>
              <SmallRow><RowIcon><SnapIcon /></RowIcon>Снимок<Caret /></SmallRow>
            </SmallCol>
          </GroupBody>
          <GroupLabel>Иллюстрации</GroupLabel>
        </Group>
        <Group $w={254}>
          <GroupBody $pad={8}>
            <SmallCol $w={159} $top={10} $gap={10}>
              <SmallRow><RowIcon><StoreIcon /></RowIcon>Магазин</SmallRow>
              <SmallRow><RowIcon><AddinsIcon /></RowIcon>Мои надстройки<Caret $left={10} /></SmallRow>
            </SmallCol>
            <LargeButton $w={84}>
              <LargeIcon><BigSerif>W</BigSerif></LargeIcon>
              <LargeLine>Википедия</LargeLine>
            </LargeButton>
          </GroupBody>
          <GroupLabel>Надстройки</GroupLabel>
        </Group>
        <Group $w={87}>
          <GroupBody>
            <LargeButton $w={86} $off>
              <LargeIcon><VideoIcon /></LargeIcon>
              <LargeLine>Видео из</LargeLine>
              <LargeLine>Интернета</LargeLine>
            </LargeButton>
          </GroupBody>
          <GroupLabel>Мультимедиа</GroupLabel>
        </Group>
        <Group $w={192}>
          <GroupBody $pad={7}>
            <SmallCol>
              <SmallRow><RowIcon><LinkIcon /></RowIcon>Гиперссылка</SmallRow>
              <SmallRow><RowIcon><BookmarkIcon /></RowIcon>Закладка</SmallRow>
              <SmallRow><RowIcon><CrossRefIcon /></RowIcon>Перекрестная ссылка</SmallRow>
            </SmallCol>
          </GroupBody>
          <GroupLabel>Ссылки</GroupLabel>
        </Group>
        <Group $w={105}>
          <GroupBody>
            <LargeButton $w={104}>
              <LargeIcon><CommentIcon /></LargeIcon>
              <LargeLine>Примечание</LargeLine>
            </LargeButton>
          </GroupBody>
          <GroupLabel>Примечания</GroupLabel>
        </Group>
        <Group $w={193}>
          <GroupBody $pad={6}>
            <SmallCol>
              <SmallRow><RowIcon><HeaderFooterIcon /></RowIcon>Верхний колонтитул<Caret /></SmallRow>
              <SmallRow><RowIcon><HeaderFooterIcon foot /></RowIcon>Нижний колонтитул<Caret /></SmallRow>
              <SmallRow><RowIcon><PageNoIcon /></RowIcon>Номер страницы<Caret /></SmallRow>
            </SmallCol>
          </GroupBody>
          <GroupLabel>Колонтитулы</GroupLabel>
        </Group>
        <Group $w={162}>
          <GroupBody>
            <LargeButton $w={84}>
              <LargeIcon><TextBoxIcon /></LargeIcon>
              <LargeLine>Текстовое</LargeLine>
              <LargeLine>поле<Caret /></LargeLine>
            </LargeButton>
            <MiniGrid>
              <MiniCell><PartsIcon /><Caret $left={6} /></MiniCell>
              <MiniCell><SignIcon /><Caret $left={2} /></MiniCell>
              <MiniCell><MathGlyph $italic $size={22}>A</MathGlyph><Caret $left={6} /></MiniCell>
              <MiniCell><CalendarIcon /></MiniCell>
              <MiniCell><DropCapIcon /><Caret $left={4} $color="#ccc" /></MiniCell>
              <MiniCell><ObjectIcon /><Caret $left={4} /></MiniCell>
            </MiniGrid>
          </GroupBody>
          <GroupLabel>Текст</GroupLabel>
        </Group>
        <Group $w={133}>
          <GroupBody $pad={7}>
            <SmallCol>
              <SmallRow><RowIcon><MathGlyph $italic>π</MathGlyph></RowIcon>Уравнение<Caret $left={10} /></SmallRow>
              <SmallRow><RowIcon><MathGlyph>Ω</MathGlyph></RowIcon>Символ<Caret /></SmallRow>
            </SmallCol>
          </GroupBody>
          <GroupLabel>Символы</GroupLabel>
        </Group>
        <Collapse><ChevronIcon /></Collapse>
      </Ribbon>
      <DocTabs>
        <DocTab $w={459}><DocIcon /><DocTabName>матрица техкарты урока [Р...енной функциональности] *</DocTabName></DocTab>
        <DocTab $w={459}><DocIcon /><DocTabName>Урок алгебры в 8 классе _...иченной функциональности]</DocTabName></DocTab>
        <DocTab $w={457}><DocIcon /><DocTabName $pad={124}>user_file_5c530544211da *</DocTabName></DocTab>
        <DocTab $w={459} $active><DocIcon /><DocTabName>texnologicheskaya-karta-...ной функциональности] *</DocTabName><DocClose>×</DocClose></DocTab>
        <StripButton $left={1}><NewTabIcon /></StripButton>
        <StripButton $left={2}><Caret $left={0} $color="#000" /></StripButton>
        <StripButton $left={2}>x</StripButton>
      </DocTabs>
      <DocArea>
        <RulerRow>
          <RulerCorner><CornerIcon /></RulerCorner>
          <HRulerSlot><HRuler /></HRulerSlot>
        </RulerRow>
        <DocBody>
          <VRulerSlot><VRuler /></VRulerSlot>
          <Diagram />
        </DocBody>
      </DocArea>
      <StatusBar>
        <StatusText $w={114}>Страница 9 из 9</StatusText>
        <StatusText $w={118}>Число слов: 1656</StatusText>
        <StatusIcon $w={24}><ProofIcon /></StatusIcon>
        <StatusText $w={70} $pad={17}>русский</StatusText>
        <StatusRight>
          <StatusIcon $w={22}><ReadIcon /></StatusIcon>
          <StatusIcon $w={41} $left={10} $on><PrintIcon /></StatusIcon>
          <StatusIcon $w={40}><WebIcon /></StatusIcon>
          <ZoomSign $left={3}>−</ZoomSign>
          <Zoom><ZoomThumb /></Zoom>
          <ZoomSign>+</ZoomSign>
          <ZoomValue>100%</ZoomValue>
        </StatusRight>
      </StatusBar>
      <Taskbar>
        <StartSlot><StartIcon /></StartSlot>
        <SearchBox>
          <SearchIcon />
          Введите здесь текст для поиска
        </SearchBox>
        <TaskCell><CortanaIcon /></TaskCell>
        <TaskCell><TaskViewIcon /></TaskCell>
        <TaskCell><EdgeIcon /><RunBar $inset={6} /></TaskCell>
        <TaskCell><ExplorerIcon /><RunBar $inset={6} $split /></TaskCell>
        <TaskCell><MailIcon /></TaskCell>
        <TaskCell $active>
          <OfficeIcon color="#2a5699" letter="W" lines={<path d="M18 8h7M18 11h7M18 14h7M18 17h7M18 20h7" stroke="#2a5699" />} />
          <RunBar $inset={0} />
        </TaskCell>
        <TaskCell>
          <OfficeIcon color="#1f7244" letter="X" lines={<path d="M18 8h7M18 12h7M18 16h7M18 20h7M21 5v18" stroke="#1f7244" />} />
        </TaskCell>
        <TaskCell>
          <OfficeIcon color="#d24726" letter="P" lines={<path d="M19 14h6M19 18h6" stroke="#d24726" strokeWidth="2" />} />
        </TaskCell>
        <TaskCell><ToolIcon /></TaskCell>
        <Tray>
          <TrayCell $w={30}><ChevronIcon color="#111" /></TrayCell>
          <TrayCell $w={30}><MeetIcon /></TrayCell>
          <TrayCell $w={30}><BatteryIcon /></TrayCell>
          <TrayCell $w={28}><WifiIcon /></TrayCell>
          <TrayCell $w={25}><SpeakerIcon /></TrayCell>
          <TrayCell $w={58}>РУС</TrayCell>
          <TrayCell $w={72}>
            <span>22:59</span>
            <span>27.10.2021</span>
          </TrayCell>
          <TrayCell $w={66}>
            <NotifIcon />
            <NotifBadge>2</NotifBadge>
          </TrayCell>
        </Tray>
      </Taskbar>
    </Window>
  );
}
